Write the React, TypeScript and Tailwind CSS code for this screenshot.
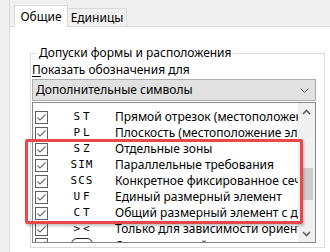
import React from "react";

type Row = { code: string; text: string; wide: boolean };

const rows: Row[] = [
  { code: "ST", text: "Прямой отрезок (местоположение элемента)", wide: true },
  { code: "PL", text: "Плоскость (местоположение элемента)", wide: true },
  { code: "SZ", text: "Отдельные зоны", wide: true },
  { code: "SIM", text: "Параллельные требования", wide: false },
  { code: "SCS", text: "Конкретное фиксированное сечение", wide: false },
  { code: "UF", text: "Единый размерный элемент", wide: true },
  { code: "CT", text: "Общий размерный элемент с допуском", wide: true },
  { code: "><", text: "Только для зависимости ориентации", wide: true },
];

function CheckBox() {
  return (
    <div className="w-[13px] h-[13px] border border-[#5f5f5f] bg-white shrink-0 flex items-center justify-center">
      <svg width="11" height="11" viewBox="0 0 11 11">
        <path d="M1.5 5.5 L4 8 L9.5 2.5" fill="none" stroke="#6d6d6d" strokeWidth="1.1" />
      </svg>
    </div>
  );
}

function ListRow({ row }: { row: Row }) {
  return (
    <div className="h-[16px] flex items-center">
      <div className="w-[13px] ml-[2px] shrink-0">
        <CheckBox />
      </div>
      <div
        className={
          "w-[67px] shrink-0 text-center font-['DejaVu_Sans_Mono',monospace] text-[11px] " +
          (row.wide ? "tracking-[3px] pl-[3px]" : "tracking-[1px] pl-[1px]")
        }
      >
        {row.code}
      </div>
      <div className="whitespace-nowrap">{row.text}</div>
    </div>
  );
}

export default function App() {
  return (
    <div className="w-[330px] h-[252px] overflow-hidden relative flex bg-white text-black font-['Noto_Sans',sans-serif] text-[12px] leading-[16px]">
      {/* left strip of the dialog */}
      <div className="w-[10px] shrink-0 bg-[#f0f0f0] border-r border-[#dadada]" />

      <div className="flex-1 flex flex-col min-w-0">
        {/* tab strip */}
        <div className="h-[27px] shrink-0 bg-[#f0f0f0] border-b border-[#d9d9d9] flex items-end pl-[4px]">
          <div className="relative z-10 w-[54px] h-[22px] -mb-px bg-white border border-b-0 border-[#d9d9d9] flex justify-center pt-[3px]">
            Общие
          </div>
          <div className="w-[59px] h-[18px] border-t border-r border-[#d9d9d9] flex justify-center pt-[1px]">
            Единицы
          </div>
        </div>

        {/* tab page */}
        <div className="flex-1 pl-[20px] pt-[26px]">
          <div className="w-[295px] h-[195px] border border-[#dcdcdc] pl-[1px] pr-[8px]">
            <div className="-mt-[9px] ml-[5px] px-[2px] w-fit bg-white">Допуски формы и расположения</div>
            <div className="mt-[1px]">
              <span className="underline underline-offset-2">П</span>оказать обозначения для
            </div>
            <div className="mt-[1px] h-[22px] bg-[#e1e1e1] border border-[#adadad] flex items-center pl-[3px] pr-[6px]">
              <span className="flex-1">Дополнительные символы</span>
              <svg width="9" height="5" viewBox="0 0 9 5">
                <path d="M0.5 0.5 L4.5 4.5 L8.5 0.5" fill="none" stroke="#5a5a5a" strokeWidth="1" />
              </svg>
            </div>
            <div className="mt-[1px] h-[141px] border border-[#828790] flex overflow-hidden">
              <div className="flex-1 min-w-0 overflow-hidden pt-[6px]">
                {rows.map((r) => (
                  <ListRow key={r.code} row={r} />
                ))}
                <div className="h-[16px] flex items-start pt-[1px]">
                  <div className="w-[13px] ml-[2px] shrink-0">
                    <CheckBox />
                  </div>
                  <div className="w-[67px] shrink-0 flex justify-center">
                    <svg width="22" height="12" viewBox="0 0 22 12">
                      <rect x="0.5" y="0.5" width="21" height="11" rx="5.5" fill="none" stroke="#222" />
                    </svg>
                  </div>
                  <div className="whitespace-nowrap">Статистический допуск</div>
                </div>
              </div>
              {/* scrollbar */}
              <div className="w-[17px] shrink-0 bg-[#f0f0f0] flex flex-col">
                <div className="h-[17px] flex items-center justify-center">
                  <svg width="9" height="6" viewBox="0 0 9 6">
                    <path d="M1 5 L4.5 1.5 L8 5" fill="none" stroke="#606060" strokeWidth="1.6" />
                  </svg>
                </div>
                <div className="h-[48px]" />
                <div className="h-[32px] mx-[2px] bg-[#cdcdcd]" />
                <div className="flex-1" />
                <div className="h-[17px] flex items-center justify-center">
                  <svg width="9" height="6" viewBox="0 0 9 6">
                    <path d="M1 1 L4.5 4.5 L8 1" fill="none" stroke="#606060" strokeWidth="1.6" />
                  </svg>
                </div>
              </div>
            </div>
          </div>
        </div>
      </div>

      {/* red highlight frame drawn over the list */}
      <div className="absolute left-[25px] top-[139px] w-[278px] h-[85px] border-[3px] border-[#e8484a] rounded-[2px] shadow-[1px_2px_3px_rgba(0,0,0,0.25)] pointer-events-none" />
    </div>
  );
}
